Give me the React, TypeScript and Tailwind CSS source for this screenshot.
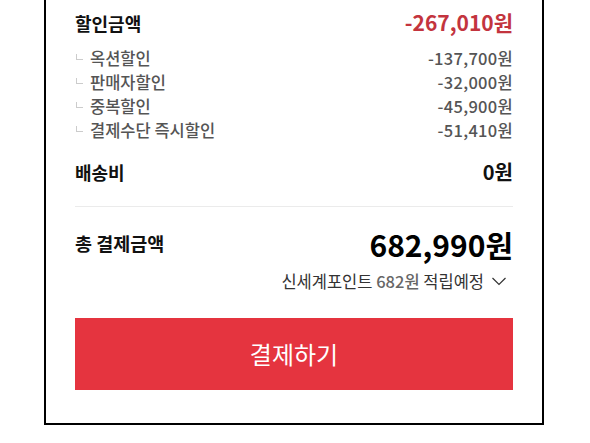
import React from 'react';

const font = { fontFamily: '"Noto Sans CJK KR", "Noto Sans", sans-serif' };

const discounts = [
  { label: '옥션할인', amount: '-137,700원' },
  { label: '판매자할인', amount: '-32,000원' },
  { label: '중복할인', amount: '-45,900원' },
  { label: '결제수단 즉시할인', amount: '-51,410원' },
];

const SubRow: React.FC<{ label: string; amount: string }> = ({ label, amount }) => (
  <div className="flex items-center justify-between h-[24px] text-[16.5px] font-medium text-[#555]">
    <div className="flex items-center">
      <span className="w-[7px] h-[6px] border-l border-b border-[#ccc] ml-[1px] mr-[7px] mb-[3px]"></span>
      <span>{label}</span>
    </div>
    <span className="tracking-[0.3px]">{amount}</span>
  </div>
);

const App: React.FC = () => {
  return (
    <div className="w-[590px] h-[443px] bg-white overflow-hidden" style={font}>
      <div className="ml-[44px] w-[500px] h-[425px] border-x-2 border-b-2 border-black px-[29px] pt-[11px]">
        <div className="flex items-center justify-between h-[24px]">
          <span className="text-[18px] font-bold text-[#111]">할인금액</span>
          <span className="text-[21px] font-bold text-[#c3343e]">-267,010원</span>
        </div>

        <div className="mt-[11px]">
          {discounts.map(d => (
            <SubRow key={d.label} label={d.label} amount={d.amount} />
          ))}
        </div>

        <div className="flex items-center justify-between h-[24px] mt-[18px]">
          <span className="text-[18px] font-bold text-[#111]">배송비</span>
          <span className="text-[20px] font-bold text-[#111]">0원</span>
        </div>

        <div className="mt-[22px] border-t border-[#ebebeb]"></div>

        <div className="flex items-center justify-between h-[32px] mt-[21px]">
          <span className="text-[18.5px] font-bold text-[#111]">총 결제금액</span>
          <span className="text-[30px] font-bold text-black">682,990원</span>
        </div>

        <div className="flex items-center justify-end h-[20px] mt-[11px] text-[16.5px] text-[#333]">
          <span>신세계포인트 <span className="text-[#666] font-medium">682원</span> 적립예정</span>
          <svg width="16" height="10" viewBox="0 0 16 10" className="ml-[7px] mr-[6px]">
            <path d="M1.5 2 L8 8.5 L14.5 2" fill="none" stroke="#333" strokeWidth="1.2" />
          </svg>
        </div>

        <button className="mt-[27px] w-full h-[72px] bg-[#e5343f] text-white text-[24px] flex items-center justify-center">
          결제하기
        </button>
      </div>
    </div>
  );
};

export default App;
